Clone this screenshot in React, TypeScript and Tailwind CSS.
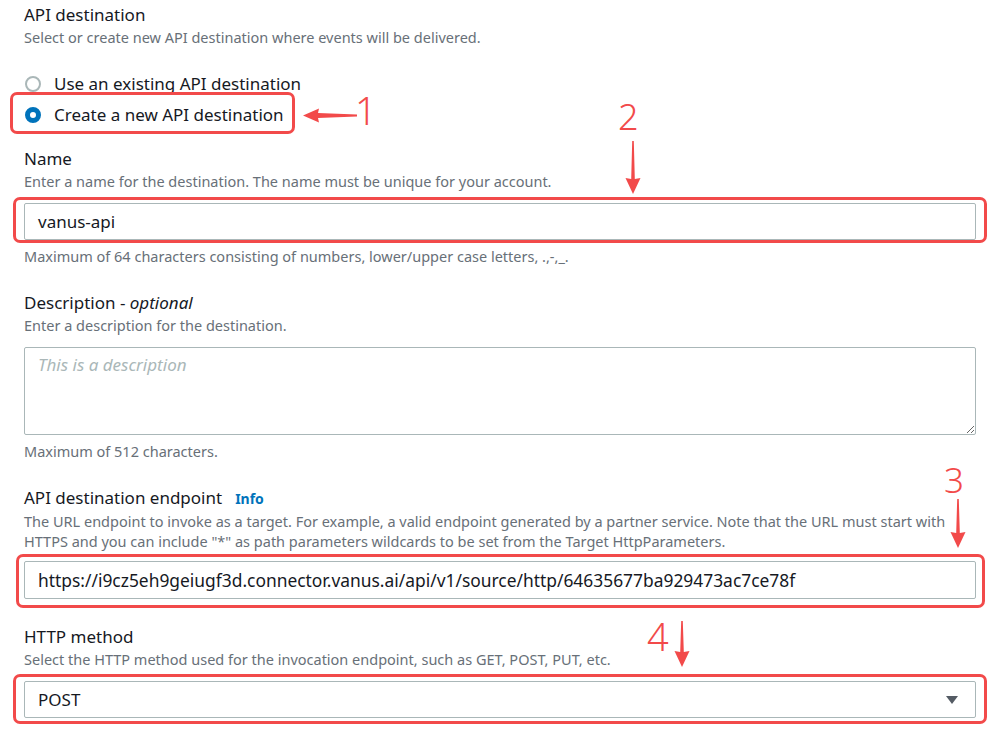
const font = { fontFamily: '"Noto Sans", "Open Sans", Arial, sans-serif' };

function Label({ children }: { children: React.ReactNode }) {
  return <div className="text-[17px] leading-[22px] text-[#16191f]">{children}</div>;
}

function Hint({ children }: { children: React.ReactNode }) {
  return <div className="mt-[1px] text-[14.5px] leading-[20px] text-[#687078]">{children}</div>;
}

function Radio({ checked, label }: { checked?: boolean; label: string }) {
  return (
    <div className="flex h-[31px] items-center gap-[13px] pl-[1px]">
      {checked ? (
        <span className="h-[16px] w-[16px] rounded-full border-[5px] border-[#0073bb] bg-white" />
      ) : (
        <span className="h-[16px] w-[16px] rounded-full border-[2px] border-[#aab7b8] bg-white" />
      )}
      <span className="text-[17px] text-[#16191f]">{label}</span>
    </div>
  );
}

function Callout({ className }: { className: string }) {
  return <div className={"pointer-events-none absolute rounded-[7px] border-[3px] border-[#f24a4a] " + className} />;
}

function DownArrow({ className, length }: { className: string; length: number }) {
  return (
    <svg className={"absolute " + className} width="16" height={length} viewBox={`0 0 16 ${length}`}>
      <path
        d={`M7.2 0 L8.8 0 L9.8 ${length - 15} L15.5 ${length - 16} L8 ${length} L0.5 ${length - 16} L6.2 ${length - 15} Z`}
        fill="#f24a4a"
      />
    </svg>
  );
}

export default function App() {
  return (
    <div className="relative h-[740px] w-[1000px] overflow-hidden bg-white px-[24px] pt-[4px]" style={font}>
      <Label>API destination</Label>
      <Hint>Select or create new API destination where events will be delivered.</Hint>

      <div className="mt-[21px]">
        <Radio label="Use an existing API destination" />
        <div className="relative">
          <Radio checked label="Create a new API destination" />
          <Callout className="-left-[14px] right-[681px] -top-[7px] -bottom-[4px]" />
        </div>
      </div>

      <div className="mt-[18px]">
        <Label>Name</Label>
        <Hint>Enter a name for the destination. The name must be unique for your account.</Hint>
        <div className="relative mt-[12px]">
          <div className="flex h-[37px] items-center rounded-[2px] border border-[#aab7b8] pl-[13px] text-[17px] text-[#16191f]">
            vanus-api
          </div>
          <Callout className="-left-[11px] -right-[11px] -top-[6px] -bottom-[3px]" />
        </div>
        <div className="mt-[6px] text-[14.5px] leading-[20px] text-[#687078]">
          Maximum of 64 characters consisting of numbers, lower/upper case letters, .,-,_.
        </div>
      </div>

      <div className="mt-[26px]">
        <Label>
          Description - <i>optional</i>
        </Label>
        <Hint>Enter a description for the destination.</Hint>
        <textarea
          className="mt-[12px] block h-[88px] w-full resize-y rounded-[2px] border border-[#aab7b8] px-[13px] py-[6px] text-[17px] leading-[22px] text-[#16191f] outline-none placeholder:italic placeholder:text-[#aab7b8]"
          placeholder="This is a description"
          style={font}
        />
        <div className="mt-[6px] text-[14.5px] leading-[20px] text-[#687078]">Maximum of 512 characters.</div>
      </div>

      <div className="mt-[26px]">
        <Label>
          API destination endpoint
          <span className="ml-[13px] text-[14px] font-bold text-[#0073bb]">Info</span>
        </Label>
        <Hint>
          The URL endpoint to invoke as a target. For example, a valid endpoint generated by a partner service. Note that the URL must start with
          <br />
          HTTPS and you can include "*" as path parameters wildcards to be set from the Target HttpParameters.
        </Hint>
        <div className="relative mt-[10px]">
          <div className="flex h-[38px] items-center rounded-[2px] border border-[#aab7b8] pl-[13px] text-[17.4px] text-[#16191f]">
            https://i9cz5eh9geiugf3d.connector.vanus.ai/api/v1/source/http/64635677ba929473ac7ce78f
          </div>
          <Callout className="-left-[8px] -right-[9px] -top-[7px] -bottom-[9px]" />
        </div>
      </div>

      <div className="mt-[27px]">
        <Label>HTTP method</Label>
        <Hint>Select the HTTP method used for the invocation endpoint, such as GET, POST, PUT, etc.</Hint>
        <div className="relative mt-[12px]">
          <div className="flex h-[37px] items-center justify-between rounded-[2px] border border-[#aab7b8] pl-[13px] pr-[17px] text-[17px] text-[#16191f]">
            <span>POST</span>
            <svg width="12" height="8" viewBox="0 0 12 8">
              <path d="M0 0 L12 0 L6 8 Z" fill="#545b64" />
            </svg>
          </div>
          <Callout className="-left-[11px] -right-[11px] -top-[7px] -bottom-[6px]" />
        </div>
      </div>

      {/* annotations */}
      <svg className="absolute left-[303px] top-[108px]" width="54" height="15" viewBox="0 0 54 15">
        <path d="M0 7.5 L16 0.5 L15 5 L54 6.6 L54 8.4 L15 10 L16 14.5 Z" fill="#f24a4a" />
      </svg>
      <div className="absolute left-[355px] top-[86px] text-[38px] font-light leading-[48px] text-[#f24a4a]">1</div>

      <div className="absolute left-[618px] top-[94px] text-[36px] font-light leading-[46px] text-[#f24a4a]">2</div>
      <DownArrow className="left-[625px] top-[141px]" length={53} />

      <div className="absolute left-[944px] top-[457px] text-[35px] font-light leading-[45px] text-[#f24a4a]">3</div>
      <DownArrow className="left-[950px] top-[499px]" length={49} />

      <div className="absolute left-[647px] top-[612px] text-[38px] font-light leading-[48px] text-[#f24a4a]">4</div>
      <DownArrow className="left-[674px] top-[621px]" length={46} />
    </div>
  );
}
